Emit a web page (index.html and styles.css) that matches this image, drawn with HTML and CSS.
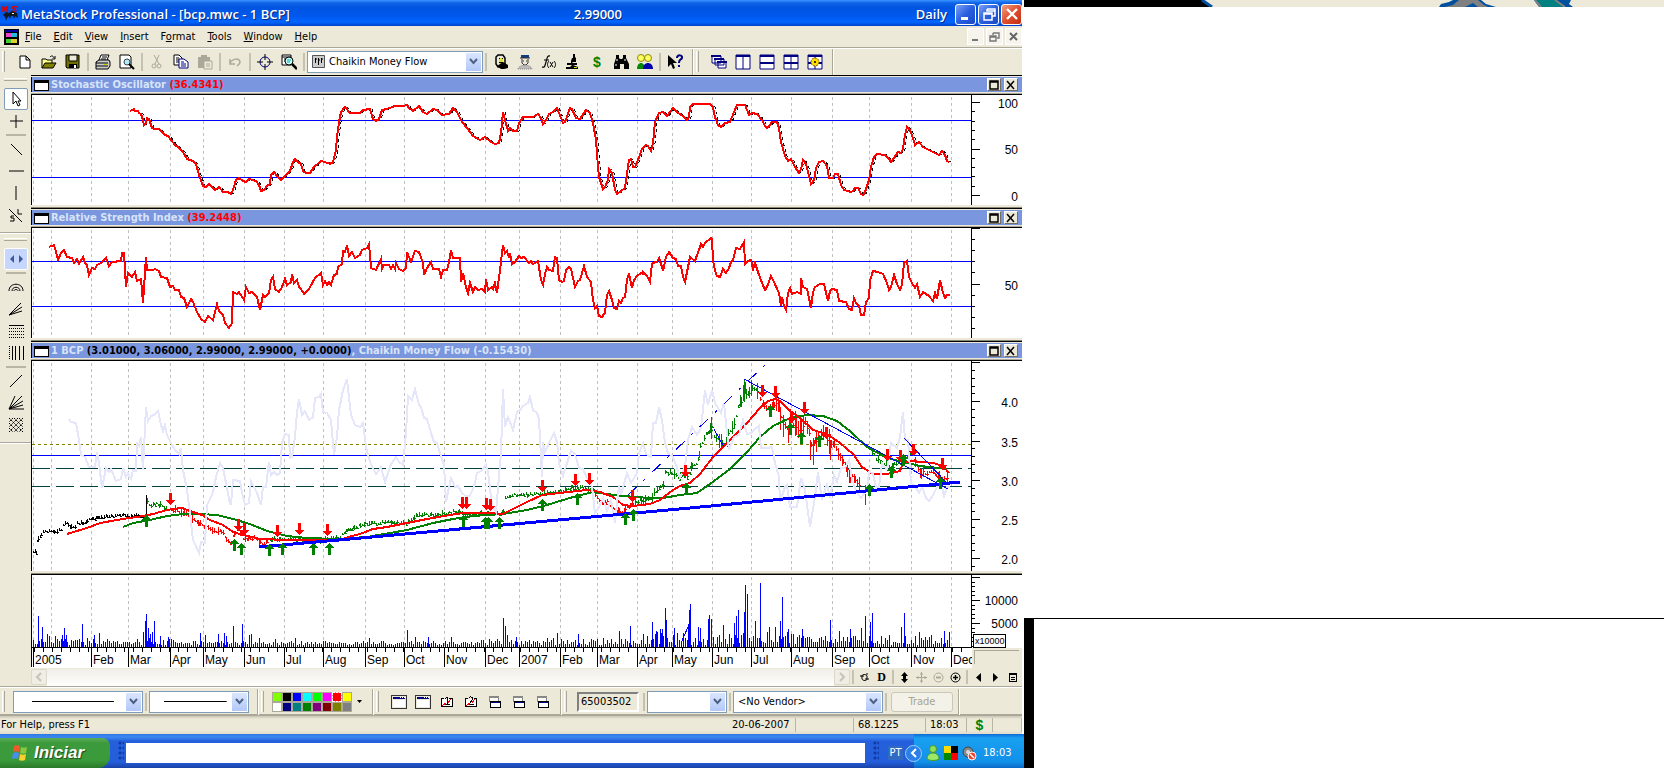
FILE: index.html
```html
<!DOCTYPE html>
<html lang="en">
<head>
<meta charset="UTF-8">
<meta name="viewport" content="width=device-width, initial-scale=1.0">
<title>MetaStock Professional</title>
<link rel="stylesheet" href="styles.css">
</head>
<body>

<div class="screen">
<div class="desktop">

<main class="app">
  <header class="titlebar">
    <svg class="app-icon" width="17" height="16" viewBox="0 0 17 16"><path d="M1 6V0l2 4 2-4v6M15 1c-4-2-6 1-3 2s2 4-3 2" fill="none" stroke="#e00000" stroke-width="1.5"/><path d="M1 9l3-3 3 1 3-2 5 2 1 5-3-2-1 3-1-3-2 0-1 3-1-3-2 2-1 3-1-4z" fill="#101820"/><path d="M10 7h2v1h-2z" fill="#fff"/></svg>
    <h1>MetaStock Professional - [bcp.mwc - 1 BCP]</h1>
    <span class="quote">2.99000</span>
    <span class="period">Daily</span>
    <button class="win" aria-label="Minimize"><svg width="18" height="18"><path d="M4 12h7v3H4z" fill="#fff"/></svg></button>
    <button class="win" aria-label="Restore"><svg width="18" height="18"><path d="M7 4h8v7h-3M7 4v2h8M4 8h8v7H4zM4 9h8" fill="none" stroke="#fff" stroke-width="1.5"/></svg></button>
    <button class="win close" aria-label="Close"><svg width="18" height="18"><path d="M4 4l10 10M14 4L4 14" stroke="#fff" stroke-width="2.4"/></svg></button>
  </header>

  <nav class="menubar">
    <svg width="15" height="16" viewBox="0 0 15 16"><path d="M0 0h15v16H0z"/><path d="M1 1h13v2H1z" fill="#0000a0"/><path d="M2 4h11v4H2z" fill="#e4c"/><path d="M7 4h6v4H7z" fill="#2bd"/><path d="M2 10h11v4H2z" fill="#dc3"/><path d="M2 10h5v4H2z" fill="#4c3"/></svg>
    <button><u>F</u>ile</button>
    <button><u>E</u>dit</button>
    <button><u>V</u>iew</button>
    <button><u>I</u>nsert</button>
    <button>F<u>o</u>rmat</button>
    <button><u>T</u>ools</button>
    <button><u>W</u>indow</button>
    <button><u>H</u>elp</button>
    <div class="mdi">
      <button aria-label="Minimize chart"><svg width="14" height="14"><path d="M4 9h6v2H4z" fill="#777"/></svg></button>
      <button aria-label="Restore chart"><svg width="14" height="14"><path d="M6 3h6v5h-2M6 3v2M3 6h6v5H3zM3 7h6" fill="none" stroke="#777" stroke-width="1.4"/></svg></button>
      <button aria-label="Close chart"><svg width="14" height="14"><path d="M4 3l7 7M11 3l-7 7" stroke="#666" stroke-width="2"/></svg></button>
    </div>
  </nav>

  <div class="toolbar">
    <i class="grip"></i>
    <button class="tool" aria-label="New"><svg width="16" height="16"><path d="M3 2h6l4 4v8H3zM9 2v4h4" fill="#fff" stroke="#000"/></svg></button>
    <button class="tool" aria-label="Open"><svg width="16" height="16"><path d="M1 14V5h4l1 1h5v3" fill="#ffff90" stroke="#000"/><path d="M1 14l3-5h11l-3 5z" fill="#808000" stroke="#000"/><path d="M9 3c2-2 3-1 4 1M14 2v3h-3" fill="none" stroke="#000"/></svg></button>
    <button class="tool" aria-label="Save"><svg width="16" height="16"><path d="M1 1h13v13H2l-1-1z" fill="#707000" stroke="#000"/><path d="M4 1h8v6H4z" fill="#ece9d8" stroke="#000"/><path d="M4 10h8v4H4z"/><path d="M9 11h2v3H9z" fill="#fff"/></svg></button>
    <i class="sep"></i>
    <button class="tool" aria-label="Print"><svg width="16" height="16"><path d="M4 6l2-5h8l-2 5" fill="#fff" stroke="#000"/><path d="M1 8l3-2h10l1 2v4l-2 3H1z" fill="#ccc" stroke="#000"/><path d="M1 9h12M1 12h12M7 3h5M6 5h5" stroke="#000"/><path d="M9 10h3v1H9z" fill="#cc0"/></svg></button>
    <button class="tool" aria-label="Print Preview"><svg width="16" height="16"><path d="M1 1h9l2 2v11H1z" fill="#fff" stroke="#000"/><circle cx="8" cy="8" r="3" fill="#aef" stroke="#444"/><path d="M10 10l5 5" stroke="#000" stroke-width="2"/></svg></button>
    <i class="sep"></i>
    <button class="tool" aria-label="Cut" disabled><svg width="16" height="16"><path d="M5 1l5 9M10 1L6 10" stroke="#aca899" fill="none"/><circle cx="5" cy="12" r="2" fill="none" stroke="#aca899"/><circle cx="10" cy="12" r="2" fill="none" stroke="#aca899"/></svg></button>
    <button class="tool" aria-label="Copy"><svg width="16" height="16"><path d="M1 1h5l3 3v7H1zM3 4h3M3 6h4M3 8h4" fill="#fff" stroke="#000"/><path d="M6 5h5l4 3v6H6zM8 8h3M8 10h5M8 12h5" fill="#fff" stroke="#000080"/></svg></button>
    <button class="tool" aria-label="Paste" disabled><svg width="16" height="16"><path d="M1 3h12v11H1zM4 1h6v3H4z" fill="#aca899"/><path d="M7 7h8v8H7zM9 10h4M9 12h4" fill="#ece9d8" stroke="#aca899"/></svg></button>
    <i class="sep"></i>
    <button class="tool" aria-label="Undo" disabled><svg width="16" height="16"><path d="M3 5v5h5M3 9c3-5 10-5 10-1 0 2-2 3-3 4" fill="none" stroke="#aca899" stroke-width="1.5"/></svg></button>
    <i class="sep"></i>
    <button class="tool" aria-label="Crosshairs"><svg width="16" height="16"><circle cx="8" cy="8" r="5" fill="none" stroke="#000080"/><path d="M8 0v6M8 10v6M0 8h6M10 8h6" stroke="#000"/></svg></button>
    <button class="tool" aria-label="Zoom"><svg width="16" height="16"><path d="M1 1h9v10H1zM1 3h9M3 5h3M3 7h2" fill="#fff" stroke="#000"/><circle cx="8" cy="7" r="4" fill="#c8fff8" stroke="#000"/><path d="M11 10l5 5" stroke="#000" stroke-width="2.5"/><path d="M6 6h4M6 8h3" stroke="#0aa"/></svg></button>
    <i class="sep"></i>
    <div class="combo combo-indicator">
      <svg class="combo-pic" width="13" height="13"><path d="M.5.5h12v12H.5z" fill="#ccc" stroke="#555"/><path d="M3.500 3v5M6.500 3v7M9.500 3v5M3 4h2M6 5h2M9 4h2" stroke="#000"/></svg>
      <select aria-label="Indicator"><option>Chaikin Money Flow</option></select>
      <span class="arrow"><svg width="9" height="7"><path d="M1 1l3.500 4L8 1" fill="none" stroke="#4d6185" stroke-width="2"/></svg></span>
    </div>
    <i class="sep"></i>
    <button class="tool" aria-label="Expert Commentary"><svg width="16" height="16"><path d="M5 1h5l2 3v6l-3 3H5L3 10V3z" fill="#ece9d8" stroke="#000" stroke-width="1.500"/><path d="M6 4h4v6H6z" fill="#dd4"/><path d="M6 4h1v1H6zM9 4h1v1H9zM6 8h4v1H6z"/><path d="M10 8l5 3v3l-4 1H8l-4-3z"/></svg></button>
    <button class="tool" aria-label="Expert Advisor"><svg width="16" height="16"><path d="M4 1h8v3H4z" fill="#113a80"/><path d="M3 4h10M5 5v4l2 2h2l2-2V5M6 7h1M9 7h1" stroke="#333" fill="none"/><path d="M1 15c1-5 13-5 14 0z" fill="#bbb" stroke="#888" stroke-dasharray="1 1"/></svg></button>
    <button class="tool" aria-label="Indicator Builder"><svg width="16" height="16"><path d="M9 2c-3-1-3 3-4 6s-1 6-4 5M3 6h5" fill="none" stroke="#000" stroke-width="1.200"/><path d="M8 7c-2 2-2 5 0 7M13 7c2 2 2 5 0 7M9 8l3 5M12 8l-3 5" fill="none" stroke="#000"/></svg></button>
    <button class="tool" aria-label="Explorer"><svg width="16" height="16"><path d="M8 0h2v3l1 1v4H8l-2 2V7l1-3h1zM2 9h10v2H8l5 2v2H1v-2h4l2-2H2z"/><path d="M9 13h3v1H9z" fill="#dd0"/></svg></button>
    <button class="tool dollar" aria-label="System Tester">$</button>
    <button class="tool" aria-label="Find"><svg width="16" height="16"><path d="M3 1h3v3l1 1h2l1-1V1h3v3l3 6v5h-5v-5H7v5H1v-5l2-6z"/><path d="M4 5v2M12 5v2M3 10v2" stroke="#fff"/></svg></button>
    <button class="tool" aria-label="Users"><svg width="16" height="16"><circle cx="4" cy="4" r="3.500" fill="#ffff60" stroke="#880"/><circle cx="11" cy="4" r="3.500" fill="#ffff60" stroke="#880"/><path d="M0 15c0-8 8-8 8 0z" fill="#080"/><path d="M6 15c0-8 10-8 10 0z" fill="#00a"/></svg></button>
    <i class="sep"></i>
    <button class="tool" aria-label="Context Help"><svg width="17" height="16"><path d="M1 1v12l3-3 2 5 2-1-2-5h4z"/><path d="M10 4c0-4 6-3 5 0-1 2-3 1-3 5M12 11v2" fill="none" stroke="#000080" stroke-width="2"/></svg></button>
    <i class="edge"></i>
    <i class="grip"></i>
    <button class="tool" aria-label="Cascade"><svg width="16" height="16"><path d="M1 2h9v7H1zM4 5h9v6H4zM7 8h8v6H7z" fill="#fff" stroke="#000080"/><path d="M0 1h10v2H0zM3 4h10v2H3zM6 7h10v2H6z" fill="#000080"/></svg></button>
    <button class="tool" aria-label="Columns"><svg width="16" height="16"><path d="M1 1h14v14H1zM8 1v14" fill="#fff" stroke="#000080"/><path d="M1 1h14v2H1z" fill="#000080"/></svg></button>
    <button class="tool" aria-label="Rows"><svg width="16" height="16"><path d="M1 1h14v14H1z" fill="#fff" stroke="#000080"/><path d="M1 1h14v2H1zM1 8h14v2H1z" fill="#000080"/></svg></button>
    <button class="tool" aria-label="Tile"><svg width="16" height="16"><path d="M1 1h14v14H1zM8 1v14" fill="#fff" stroke="#000080"/><path d="M1 1h14v2H1zM1 8h14v2H1z" fill="#000080"/></svg></button>
    <button class="tool" aria-label="Layout Options"><svg width="16" height="16"><path d="M1 1h14v14H1zM8 1v14" fill="#fff" stroke="#000080"/><path d="M1 1h14v2H1zM1 8h14v2H1z" fill="#000080"/><circle cx="8" cy="8" r="4" fill="#fd0" stroke="#750" stroke-dasharray="2 1"/><circle cx="8" cy="8" r="1"/></svg></button>
    <i class="edge"></i>
  </div>

  <div class="workspace">
    <div class="palette">
      <i class="hgrip"></i>
      <button class="draw selected" aria-label="Pointer"><svg width="16" height="16"><path d="M5 1v12l3-3 2 5 2-1-2-4h3z" fill="#fff" stroke="#000"/></svg></button>
      <button class="draw" aria-label="Crosshair"><svg width="16" height="16"><path d="M8 2v13M2 8h13" stroke="#000"/></svg></button>
      <i class="hsep"></i>
      <button class="draw" aria-label="Trendline"><svg width="16" height="16"><path d="M3 3l11 11" stroke="#000"/></svg></button>
      <button class="draw" aria-label="Horizontal Line"><svg width="16" height="16"><path d="M1 8h15" stroke="#000"/></svg></button>
      <button class="draw" aria-label="Vertical Line"><svg width="16" height="16"><path d="M8 1v14" stroke="#000"/></svg></button>
      <button class="draw" aria-label="Long Short"><svg width="16" height="16"><path d="M1 2l13 13M10 2v5h4M6 9H3v2h3v3H2" fill="none" stroke="#000"/></svg></button>
      <i class="hedge"></i>
      <i class="hgrip"></i>
      <button class="draw hot" aria-label="Scroll Tools"><svg width="16" height="16"><path d="M6 4v8L2 8zM11 4v8l4-4z" fill="#3a5a9c"/></svg></button>
      <i class="hsep"></i>
      <button class="draw" aria-label="Fibonacci Arcs"><svg width="16" height="16"><path d="M1 12c0-9 14-9 14 0M4 12c0-5 8-5 8 0M6 12c0-2 4-2 4 0" fill="none" stroke="#000"/></svg></button>
      <button class="draw" aria-label="Fibonacci Fan"><svg width="16" height="16"><path d="M1 14L13 2M1 14l13-8M1 14l13-4" stroke="#000"/></svg></button>
      <button class="draw" aria-label="Fibonacci Retracement"><svg class="crisp" width="16" height="16"><path d="M1 2.500h15" stroke="#000"/><path d="M1 5.500h15M1 8.500h15M1 11.500h15M1 14.500h15" stroke="#000" stroke-dasharray="1 1"/></svg></button>
      <button class="draw" aria-label="Time Zones"><svg class="crisp" width="16" height="16"><path d="M4.500 1v14M7.500 1v14M11.500 1v14M15.500 1v14" stroke="#000"/><path d="M1.500 1v14" stroke="#000" stroke-dasharray="1 1"/></svg></button>
      <i class="hsep"></i>
      <button class="draw" aria-label="Gann Line"><svg width="16" height="16"><path d="M2 14L14 2" stroke="#000"/></svg></button>
      <button class="draw" aria-label="Gann Fan"><svg width="16" height="16"><path d="M1 14L7 1M1 14L14 1M1 14L15 6M1 14l14-4M1 14h15" stroke="#000"/></svg></button>
      <button class="draw" aria-label="Gann Grid"><svg width="16" height="16"><path d="M1 1l14 14M6 1l9 9M11 1l4 4M1 6l9 9M1 11l4 4M15 1L1 15M10 1L1 10M5 1L1 5M15 6l-9 9M15 11l-4 4" stroke="#000" stroke-dasharray="2 1"/></svg></button>
      <i class="hedge"></i>
    </div>

    <div class="charts">
      <section class="panel">
        <div class="panel-title"><i class="sysbox"></i><h2>Stochastic Oscillator <b class="red">(36.4341)</b></h2>
          <button class="pbtn" aria-label="Maximize Stochastic Oscillator"><svg width="12" height="10"><path d="M2 1h8v8H2zM2 2h8" fill="none" stroke="#000" stroke-width="1.500"/></svg></button>
          <button class="pbtn" aria-label="Close Stochastic Oscillator"><svg width="12" height="10"><path d="M2 1l7 8M9 1L2 9" stroke="#000" stroke-width="1.500"/></svg></button></div>
        <svg class="chart" id="stoch" viewBox="31 95 991 110"></svg>
      </section>
      <section class="panel">
        <div class="panel-title"><i class="sysbox"></i><h2>Relative Strength Index <b class="red">(39.2448)</b></h2>
          <button class="pbtn" aria-label="Maximize Relative Strength Index"><svg width="12" height="10"><path d="M2 1h8v8H2zM2 2h8" fill="none" stroke="#000" stroke-width="1.500"/></svg></button>
          <button class="pbtn" aria-label="Close Relative Strength Index"><svg width="12" height="10"><path d="M2 1l7 8M9 1L2 9" stroke="#000" stroke-width="1.500"/></svg></button></div>
        <svg class="chart" id="rsi" viewBox="31 228 991 110"></svg>
      </section>
      <section class="panel">
        <div class="panel-title"><i class="sysbox"></i><h2>1 BCP <b class="black">(3.01000, 3.06000, 2.99000, 2.99000, +0.0000)</b>, Chaikin Money Flow (-0.15430)</h2>
          <button class="pbtn" aria-label="Maximize BCP"><svg width="12" height="10"><path d="M2 1h8v8H2zM2 2h8" fill="none" stroke="#000" stroke-width="1.500"/></svg></button>
          <button class="pbtn" aria-label="Close BCP"><svg width="12" height="10"><path d="M2 1l7 8M9 1L2 9" stroke="#000" stroke-width="1.500"/></svg></button></div>
        <svg class="chart" id="price" viewBox="31 361 991 210"></svg>
      </section>
      <section class="panel last">
        <svg class="chart" id="volume" viewBox="31 575 991 93"></svg>
      </section>

      <div class="scrollrow">
        <button class="scrollbtn" aria-label="Scroll left" disabled><svg width="10" height="10"><path d="M7 1L3 5l4 4" fill="none" stroke="#c5c2b8" stroke-width="2"/></svg></button>
        <div class="track"></div>
        <button class="scrollbtn" aria-label="Scroll right" disabled><svg width="10" height="10"><path d="M3 1l4 4-4 4" fill="none" stroke="#c5c2b8" stroke-width="2"/></svg></button>
        <i class="sep"></i>
        <button class="mini" aria-label="Refresh"><svg width="11" height="11"><path d="M3 7V4c0-2 4-2 5 0M8 4v3c0 2-4 2-5 0M1 4h4M6 7h4M8 1v2" fill="none" stroke="#000"/></svg></button>
        <button class="mini serif" aria-label="Daily periodicity">D</button>
        <i class="sep"></i>
        <button class="mini" aria-label="Rescale"><svg width="11" height="11"><path d="M5.500 0L9 4H7v3h2l-3.500 4L2 7h2V4H2z"/></svg></button>
        <button class="mini" aria-label="Move" disabled><svg width="11" height="11"><path d="M5.500 0v11M0 5.500h11M4 2h3M4 9h3M2 4v3M9 4v3" stroke="#aca899"/></svg></button>
        <button class="mini" aria-label="Zoom out" disabled><svg width="11" height="11"><circle cx="5.500" cy="5.500" r="4.500" fill="none" stroke="#aca899"/><path d="M3 5.500h5" stroke="#aca899" stroke-width="2"/></svg></button>
        <button class="mini" aria-label="Zoom in"><svg width="11" height="11"><circle cx="5.500" cy="5.500" r="4.500" fill="none" stroke="#000"/><path d="M3 5.500h5M5.500 3v5" stroke="#000" stroke-width="1.400"/></svg></button>
        <i class="sep"></i>
        <button class="mini" aria-label="Previous security"><svg width="11" height="11"><path d="M8 1v9L3 5.500z"/></svg></button>
        <button class="mini" aria-label="Next security"><svg width="11" height="11"><path d="M3 1v9l5-4.500z"/></svg></button>
        <button class="mini" aria-label="Choose security"><svg class="crisp" width="11" height="11"><path d="M2.500 1.500h7v8h-7zM2 2.500h8M4 5.500h4M4 7.500h4" fill="none" stroke="#000"/></svg></button>
      </div>
    </div>
  </div>

  <div class="toolbar bottom">
    <i class="grip"></i>
    <div class="combo combo-line"><select aria-label="Line style"><option></option></select><span class="arrow"><svg width="9" height="7"><path d="M1 1l3.500 4L8 1" fill="none" stroke="#4d6185" stroke-width="2"/></svg></span></div>
    <i class="sep"></i>
    <div class="combo combo-weight"><select aria-label="Line weight"><option></option></select><span class="arrow"><svg width="9" height="7"><path d="M1 1l3.500 4L8 1" fill="none" stroke="#4d6185" stroke-width="2"/></svg></span></div>
    <i class="edge"></i>
    <i class="grip"></i>
    <div class="swatches">
      <button class="lime" aria-label="Lime"></button><button class="ink" aria-label="Black"></button><button class="blue" aria-label="Blue"></button><button class="cyan" aria-label="Cyan"></button><button class="green" aria-label="Green"></button><button class="pink" aria-label="Magenta"></button><button class="redc on" aria-label="Red"></button><button class="yellow" aria-label="Yellow"></button>
      <button class="white" aria-label="White"></button><button class="navy" aria-label="Navy"></button><button class="teal" aria-label="Teal"></button><button class="dgreen" aria-label="Dark green"></button><button class="purple" aria-label="Purple"></button><button class="maroon" aria-label="Maroon"></button><button class="olive" aria-label="Olive"></button><button class="gray" aria-label="Gray"></button>
    </div>
    <button class="more" aria-label="More colors"><svg width="7" height="4"><path d="M1 0h5L3.500 3z"/></svg></button>
    <i class="edge"></i>
    <i class="grip"></i>
    <button class="tool" aria-label="New chart"><svg class="crisp" width="16" height="14"><path d="M.5.500h15v13H.5z" fill="#ece9d8" stroke="#333"/><path d="M2 2h12v2H2z" fill="#000080"/><path d="M2 5h12v7H2z" fill="#fff"/><path d="M9 2.500h1M11 2.500h1M13 2.500h1" stroke="#fff"/></svg></button>
    <button class="tool" aria-label="New inner window"><svg class="crisp" width="16" height="14"><path d="M.5.500h15v13H.5z" fill="#ece9d8" stroke="#333"/><path d="M2 2h12v2H2z" fill="#000080"/><path d="M2 5h12v7H2z" fill="#fff"/><path d="M9 2.500h1M11 2.500h1M13 2.500h1" stroke="#fff"/></svg></button>
    <button class="tool" aria-label="Template 1"><svg class="crisp" width="14" height="14"><path d="M4 3.500H1.500v8h11v-8H9" fill="#fff" stroke="#000"/><path d="M5 3.500l2.500-1V9M5 9.500h5" fill="none" stroke="#000"/><path d="M2 11l4-3M8 8l3-4" stroke="red"/></svg></button>
    <button class="tool" aria-label="Template 2"><svg class="crisp" width="14" height="14"><path d="M4 3.500H1.500v8h11v-8H10" fill="#fff" stroke="#000"/><path d="M5 3c1-2 4-1 4 1l-4 5h5" fill="none" stroke="#000"/><path d="M2 11l4-3M8 8l3-4" stroke="red"/></svg></button>
    <button class="tool" aria-label="Stack windows"><svg class="crisp" width="14" height="14"><path d="M1.500 1.500h9v5h-9z" fill="#fff" stroke="#888"/><path d="M1 1h10v2H1z" fill="#888"/><path d="M2.500 6.500h10v6h-10z" fill="#fff" stroke="#000"/><path d="M3 7h9v1H3z" fill="#000080"/></svg></button>
    <button class="tool" aria-label="Bring to front"><svg class="crisp" width="14" height="14"><path d="M1.500 1.500h9v5h-9z" fill="#fff" stroke="#888"/><path d="M1 1h10v2H1z" fill="#888"/><path d="M2.500 6.500h10v6h-10z" fill="#fff" stroke="#000"/><path d="M3 7h9v1H3z" fill="#000080"/></svg></button>
    <button class="tool" aria-label="Send to back"><svg class="crisp" width="14" height="14"><path d="M1.500 1.500h9v5h-9z" fill="#fff" stroke="#888"/><path d="M1 1h10v2H1z" fill="#888"/><path d="M2.500 6.500h10v6h-10z" fill="#fff" stroke="#000"/><path d="M3 7h9v1H3z" fill="#000080"/></svg></button>
    <i class="edge"></i>
    <i class="grip"></i>
    <input class="account" aria-label="Account" value="65003502">
    <i class="sep"></i>
    <div class="combo combo-order"><select aria-label="Order"><option></option></select><span class="arrow"><svg width="9" height="7"><path d="M1 1l3.500 4L8 1" fill="none" stroke="#4d6185" stroke-width="2"/></svg></span></div>
    <i class="sep"></i>
    <div class="combo combo-vendor"><select aria-label="Vendor"><option>&lt;No Vendor&gt;</option></select><span class="arrow"><svg width="9" height="7"><path d="M1 1l3.500 4L8 1" fill="none" stroke="#4d6185" stroke-width="2"/></svg></span></div>
    <i class="sep"></i>
    <button class="trade" disabled>Trade</button>
    <i class="edge"></i>
  </div>

  <footer class="status">
    <span class="hint">For Help, press F1</span>
    <span class="cell date">20-06-2007</span>
    <span class="cell gap"></span>
    <span class="cell value">68.1225</span>
    <span class="cell time">18:03</span>
    <span class="cell money">$</span>
    <span class="cell tail"></span>
  </footer>
</main>

<div class="taskbar">
  <button class="start"><svg width="18" height="18" viewBox="0 0 18 18"><path d="M3 2c2-1 4-1 6 0L8 8c-2-1-4-1-6 0z" fill="#f0592a"/><path d="M10 3c2 1 4 1 6 0l-1 6c-2 1-4 1-6 0z" fill="#8bc83f"/><path d="M2 9c2-1 4-1 6 0l-1 6c-2-1-4-1-6 0z" fill="#4a8df0"/><path d="M9 10c2 1 4 1 6 0l-1 6c-2 1-4 1-6 0z" fill="#fbd12d"/></svg>Iniciar</button>
  <i class="dots"></i>
  <div class="tasks"></div>
  <i class="dots"></i>
  <span class="lang">PT</span>
  <div class="tray">
    <button class="expand" aria-label="Show hidden icons"><svg width="8" height="10"><path d="M6 1L2 5l4 4" fill="none" stroke="#fff" stroke-width="2"/></svg></button>
    <svg width="14" height="16"><circle cx="7" cy="4" r="3.500" fill="#8fe05a" stroke="#4a9a20"/><path d="M1 14c0-8 12-8 12 0-3 2-9 2-12 0z" fill="#9be86a" stroke="#4a9a20"/></svg>
    <svg width="14" height="14"><path d="M0 0h7v7H0z" fill="#fd0"/><path d="M7 0h7v7H7z"/><path d="M0 7h7v7H0z" fill="#080"/><path d="M7 7h7v7H7z" fill="red"/></svg>
    <svg width="15" height="15"><circle cx="6" cy="6" r="5" fill="#888" stroke="#444"/><circle cx="6" cy="6" r="2" fill="#ddd"/><circle cx="10" cy="10" r="4" fill="#e43" stroke="#fff"/><path d="M8 8l4 4" stroke="#fff" stroke-width="1.500"/></svg>
    <span>18:03</span>
  </div>
</div>

</div>

<div class="side">
  <svg class="wallpaper" viewBox="0 0 640 7" preserveAspectRatio="none">
    <path d="M0 0h640v7H0z" fill="#ece9d8"/>
    <path d="M0 0h178l9 7H0z"/>
    <path d="M178 0l10 7" stroke="#0050a0" stroke-width="3"/>
    <path d="M415 7l2-3 8-2 4-2h28l5 4 10 3z" fill="#0050a0"/>
    <path d="M421 7l8-2 6-5h19l6 5 4 2h-10l-5-4-8 4z" fill="#808080"/>
    <path d="M510 0h37l-2 4 4 3h-34z" fill="#0050a0"/>
    <path d="M512 0h20l9 7h-25z" fill="#008080"/>
    <path d="M511 0l6 7M531 0l10 7" stroke="#808080" stroke-width="2"/>
  </svg>
  <div class="blank"></div>
  <div class="lower"></div>
</div>
</div>

<script src="charts.js"></script>
</body>
</html>
```
FILE: styles.css
```css
* {
  box-sizing: border-box;
}
body {
  margin: 0;
  background: #fff;
  color: #000;
  font: 11px/14px "DejaVu Sans Condensed", "DejaVu Sans", sans-serif;
}
button, input, select {
  font: inherit;
  color: inherit;
  margin: 0;
  padding: 0;
  border: 0;
  border-radius: 0;
  background: none;
}
svg {
  display: block;
}
.crisp {
  shape-rendering: crispEdges;
}
.screen {
  display: grid;
  grid-template-columns: minmax(0, 1.6fr) minmax(0, 1fr);
}
.desktop {
  display: flex;
  flex-direction: column;
}
.app {
  margin-right: 2px;
  background: #ece9d8;
}

/* Title bar */
.titlebar {
  display: flex;
  align-items: center;
  gap: 2px;
  height: 26px;
  padding: 2px 0 0 2px;
  color: #fff;
  font: 600 13px/18px "Open Sans", "Noto Sans", sans-serif;
  text-shadow: 1px 1px 0 #0a2a80;
  background: linear-gradient(#3a95ff 0, #0f63e8 3px, #0054e0 8px, #0058ee 16px, #0066ff 22px, #0040c8 26px);
}
.titlebar h1 {
  flex: 0 0 54%;
  margin: 0;
  font: inherit;
}
.titlebar .quote {
  flex: 1;
}
.titlebar .period {
  margin-right: 6px;
}
.win {
  display: grid;
  place-items: center;
  width: 21px;
  height: 21px;
  border: 1px solid #fff;
  border-radius: 3px;
  background: linear-gradient(135deg, #7ba2f5, #2a5fe0 50%, #1a48c8);
}
.win.close {
  background: linear-gradient(135deg, #f0a080, #e05030 50%, #c03010);
}

/* Menu */
.menubar {
  display: flex;
  align-items: center;
  height: 21px;
  padding-left: 4px;
}
.menubar > button {
  padding: 0 6px;
}
.mdi {
  display: flex;
  gap: 2px;
  margin-left: auto;
}
.mdi button {
  width: 17px;
  height: 17px;
  background: #f6f4ec;
  border: 1px solid #fff;
}

/* Toolbars */
.toolbar {
  display: flex;
  align-items: center;
  height: 28px;
  border-top: 1px solid #aca899;
  box-shadow: inset 0 1px 0 #fff;
}
.grip {
  flex: none;
  width: 3px;
  height: 21px;
  margin: 0 8px 0 2px;
  border-right: 1px solid #aca899;
  border-left: 1px solid #fff;
}
.sep {
  flex: none;
  width: 2px;
  height: 18px;
  margin: 0 2px;
  background: #c5c2b2;
}
.edge {
  flex: none;
  width: 2px;
  height: 26px;
  margin-left: 5px;
  background: #aca899;
  border-right: 1px solid #fff;
}
.tool {
  flex: none;
  display: grid;
  place-items: center;
  width: 24px;
  height: 22px;
}
.dollar, .money {
  color: #008000;
  font: bold 14px/18px "Liberation Sans", sans-serif;
}
.combo {
  position: relative;
  flex: none;
  display: flex;
  align-items: center;
  height: 22px;
  background: #fff;
  border: 1px solid #7f9db9;
}
.combo select {
  appearance: none;
  width: 100%;
  height: 100%;
  padding: 0 16px 0 4px;
}
.combo-indicator {
  width: 176px;
  padding-left: 4px;
}
.combo-pic {
  flex: none;
}
.combo-line {
  width: 130px;
}
.combo-weight {
  width: 100px;
  margin-right: 3px;
}
.combo-line select, .combo-weight select {
  background: linear-gradient(#000, #000) 40% 50% / 64% 1px no-repeat;
}
.combo-order {
  width: 80px;
}
.combo-vendor {
  width: 150px;
}
.arrow {
  position: absolute;
  top: 1px;
  right: 1px;
  bottom: 1px;
  width: 15px;
  display: grid;
  place-items: center;
  background: linear-gradient(#dbe6ff, #b2c8f8);
  pointer-events: none;
}

/* Drawing tools on the left */
.workspace {
  display: grid;
  grid-template-columns: 31px minmax(0, 1fr);
}
.palette {
  display: flex;
  flex-direction: column;
  align-items: center;
  padding-top: 3px;
}
.draw {
  flex: none;
  display: grid;
  place-items: center;
  width: 24px;
  height: 22px;
  border-radius: 2px;
}
.draw.selected {
  background: #fff;
  border: 1px solid #7f9db9;
}
.draw.hot {
  background: #c6d6fc;
  border: 1px solid #fff;
}
.hgrip {
  width: 23px;
  height: 3px;
  margin-bottom: 7px;
  border-top: 1px solid #fff;
  border-bottom: 1px solid #aca899;
}
.hsep {
  width: 20px;
  height: 2px;
  margin: 2px 0;
  background: #b8b5a5;
}
.hedge {
  align-self: stretch;
  height: 2px;
  margin: 6px 0 4px;
  background: #aca899;
  border-bottom: 1px solid #fff;
}

/* Chart panels */
.panel {
  border-top: 1px solid #000;
  border-bottom: 1px solid #8a8778;
}
.panel .chart {
  border-bottom: 2px solid #ece9d8;
  box-sizing: content-box;
}
.panel.last, .panel.last .chart {
  border-bottom: 0;
}
.panel-title {
  display: flex;
  align-items: center;
  gap: 3px;
  height: 19px;
  padding: 0 4px 0 3px;
  background: #7a96df;
  border-top: 1px solid #ece9d8;
  border-bottom: 1px solid #000;
  box-shadow: inset 0 -1px 0 #aca899, inset 0 -2px 0 #ece9d8, inset 1px 0 0 #000;
}
.panel-title h2 {
  flex: 1;
  margin: 0 0 2px -1px;
  color: #d8e4f8;
  font: bold 11px/14px "DejaVu Sans Condensed", "DejaVu Sans", sans-serif;
}
.red {
  color: #f00;
}
.black {
  color: #000;
}
.sysbox {
  width: 15px;
  height: 11px;
  background: #fff;
  border: 1px solid #000;
  border-top-width: 3px;
}
.pbtn {
  width: 14px;
  height: 13px;
  margin-bottom: 2px;
  background: #ece9d8;
  border: 1px solid #fff;
  border-right-color: #716f64;
  border-bottom-color: #716f64;
}
.chart {
  width: 100%;
  height: auto;
  background: #fff;
  font: 12px "Liberation Sans", Arial, sans-serif;
  shape-rendering: crispEdges;
}
.chart path, .chart polyline {
  fill: none;
}
.chart .grid {
  stroke: #c0c0c0;
  stroke-dasharray: 3 3;
}
.chart .axis {
  stroke: #000;
}
.chart .level, .chart .trend {
  stroke: #00f;
}
.chart .support {
  stroke: #00f;
  stroke-width: 3;
}
.chart .channel {
  stroke: #00f;
  stroke-dasharray: 12 9 3 9;
}
.chart .olive {
  stroke: #808000;
  stroke-dasharray: 3 3;
}
.chart .dash {
  stroke: #004040;
  stroke-dasharray: 18 6;
}
.chart .r2 {
  stroke: #f00;
  stroke-width: 2;
}
.chart .g2 {
  stroke: #008000;
  stroke-width: 2;
}
.chart .cmf {
  stroke: #e6e6fa;
  stroke-width: 2;
}
.chart .signal {
  stroke: #000;
  stroke-dasharray: 3 3;
}
.chart .up {
  fill: #008000;
  stroke: none;
}
.chart .down {
  fill: #f00;
  stroke: none;
}
.chart .bars {
  stroke: #00f;
}

/* Scroll row */
.scrollrow {
  display: flex;
  align-items: center;
  height: 18px;
  padding-right: 1px;
}
.scrollbtn {
  display: grid;
  place-items: center;
  width: 16px;
  height: 16px;
  background: #f0eee4;
  border: 1px solid #dcd9cc;
  border-radius: 2px;
}
.track {
  flex: 1;
  height: 17px;
  background: linear-gradient(#f0efe8, #fefefc);
}
.scrollrow .sep {
  height: 14px;
}
.mini {
  display: grid;
  place-items: center;
  width: 17px;
  height: 17px;
}
.serif {
  font: bold 12px/14px "Liberation Serif", serif;
}

/* Bottom toolbar */
.bottom {
  height: 30px;
  padding-top: 2px;
  border-bottom: 2px solid #aca899;
}
.swatches {
  display: grid;
  grid-template-columns: repeat(8, 10px);
  grid-auto-rows: 10px;
}
.swatches button {
  border: 1px solid #aca899;
}
.swatches .on {
  border: 1px dashed #fff;
}
.lime { background: #80ff00; }
.ink { background: #000; }
.blue { background: #00f; }
.cyan { background: #0ff; }
.green { background: #0f0; }
.pink { background: #f0f; }
.redc { background: #f00; }
.yellow { background: #ff0; }
.white { background: #fff; }
.navy { background: #000080; }
.teal { background: #008080; }
.dgreen { background: #008000; }
.purple { background: #800080; }
.maroon { background: #800000; }
.swatches .olive { background: #808000; }
.gray { background: #808080; }
.more {
  display: grid;
  place-items: center;
  width: 15px;
  height: 20px;
}
.account {
  width: 62px;
  height: 20px;
  margin: 0 2px;
  padding-left: 2px;
  border: 2px solid;
  border-color: #808080 #fff #fff #808080;
}
.trade {
  width: 62px;
  height: 20px;
  margin-left: 2px;
  color: #a7a593;
  background: #f3f1e8;
  border: 1px solid #c9c7ba;
  border-radius: 3px;
}

/* Status bar */
.status {
  display: flex;
  align-items: center;
  height: 18px;
  padding-left: 1px;
  background: linear-gradient(#c8c5b5, #ece9d8 3px, #ece9d8 14px, #dedbc8);
}
.hint {
  flex: 1;
}
.cell {
  flex: none;
  height: 14px;
  padding: 0 4px;
  white-space: nowrap;
  border-right: 1px solid #b8b5a5;
}
.date {
  width: 68px;
}
.gap {
  width: 58px;
}
.value {
  width: 72px;
}
.time {
  width: 41px;
}
.money {
  width: 26px;
  text-align: center;
  line-height: 14px;
}
.tail {
  width: 29px;
}

/* Taskbar */
.taskbar {
  display: flex;
  align-items: center;
  height: 34px;
  background: linear-gradient(#2f78e4, #3a88f0 3px, #2560dc 7px, #245edb 28px, #1941a5);
}
.start {
  display: flex;
  align-items: center;
  gap: 5px;
  align-self: flex-end;
  width: 110px;
  height: 30px;
  padding-left: 11px;
  color: #fff;
  font: italic bold 17px/20px "Liberation Sans", sans-serif;
  text-shadow: 1px 1px 1px #1c4a1c;
  border-radius: 0 8px 12px 0;
  background: linear-gradient(#5eac56, #3c9a3c 5px, #3b9b3b 22px, #2b7a2b);
}
.dots {
  width: 6px;
  height: 20px;
  margin: 0 2px 0 8px;
  background: radial-gradient(circle at 2px 2px, #0f3aa8 1px, transparent 2px) 0 0 / 4px 5px;
}
.tasks {
  flex: 1;
  height: 20px;
  margin-top: 4px;
  background: #fff;
}
.lang {
  width: 15px;
  margin: 4px 11px 0 7px;
  color: #fff;
  text-align: center;
  background: #316ac5;
}
.tray {
  display: flex;
  align-items: center;
  gap: 4px;
  width: 110px;
  height: 34px;
  padding-top: 4px;
  color: #fff;
  background: linear-gradient(#0c6ad8, #18a0f0 4px, #1290e8 28px, #0c68c8);
}
.expand {
  display: grid;
  place-items: center;
  width: 17px;
  height: 17px;
  margin-left: -9px;
  border: 1px solid #9cd0ff;
  border-radius: 50%;
  background: #2a80e8;
}
.tray span {
  margin-left: 2px;
}

/* Area beside the desktop */
.side {
  display: grid;
  grid-template-rows: 7px minmax(0, 1fr) 150px;
}
.wallpaper {
  width: 100%;
  height: 7px;
}
.lower {
  border-top: 1px solid #000;
  border-left: 10px solid #000;
}
```
FILE: charts.js
```js
var NS = 'http://www.w3.org/2000/svg';
var months = [33, 51, 91, 128, 170, 203, 244, 284, 323, 365, 404, 444, 485, 519, 560, 597, 637, 672, 712, 751, 791, 832, 869, 911, 951];
var AXIS = 971;

function add(id, tag, attrs, text) {
  var el = document.createElementNS(NS, tag);
  for (var k in attrs) el.setAttribute(k, attrs[k]);
  if (text) el.textContent = text;
  document.getElementById(id).appendChild(el);
  return el;
}

// series are stored at three units per pixel, dx/dy is the origin of the block
function points(str, dx, dy) {
  return str.trim().split(/\s+/).map(function (p) {
    var v = p.split(',');
    return [Math.round(v[0] / 3 + dx), Math.round(v[1] / 3 + dy)];
  });
}
function join(pts, ox) {
  return pts.map(function (p) { return (p[0] + (ox || 0)) + ',' + p[1]; }).join(' ');
}
function hline(id, cls, y) {
  add(id, 'path', { 'class': cls, d: 'M32 ' + (y + 0.5) + 'H' + AXIS });
}
function frame(id, top, bottom) {
  months.forEach(function (x) {
    add(id, 'path', { 'class': 'grid', d: 'M' + (x + 0.5) + ' ' + (top + 2) + 'V' + bottom });
  });
}
function axis(id, top, bottom, first, step, count, majors, labels) {
  var d = 'M31.5 ' + top + 'V' + bottom + 'M' + (AXIS + 0.5) + ' ' + top + 'V' + bottom;
  for (var i = 0; i < count; i++) {
    var y = Math.round(first + i * step) + 0.5;
    d += 'M' + AXIS + ' ' + y + 'h' + (majors.indexOf(i) >= 0 ? 9 : 4);
  }
  add(id, 'path', { 'class': 'axis', d: d });
  labels.forEach(function (l) {
    add(id, 'text', { x: 1018, y: l[1], 'text-anchor': 'end' }, l[0]);
  });
}

/* Stochastic */
frame('stoch', 95, 205);
hline('stoch', 'level', 120);
hline('stoch', 'level', 177);
var stoch = points('390,333 402,328 404,333 414,333 418,340 424,343 428,360 432,374 438,370 442,354 448,357 456,383 462,388 478,388 488,400 496,405 504,408 512,420 524,434 534,441 548,455 562,477 580,483 588,492 598,525 610,557 618,560 628,552 644,570 656,561 670,577 684,577 694,582 700,570 708,540 716,535 728,542 738,546 748,537 768,543 778,555 782,573 792,570 800,558 810,552 814,525 822,515 832,527 842,540 852,531 870,513 878,485 886,478 894,487 902,492 910,513 918,520 930,518 942,500 962,482 976,487 990,491 1000,487 1008,450 1012,410 1018,365 1024,335 1036,321 1050,338 1080,339 1088,330 1110,328 1120,358 1128,364 1136,358 1146,331 1160,328 1185,317 1195,319 1210,317 1222,314 1228,324 1240,333 1256,319 1270,336 1280,342 1298,327 1310,330 1326,345 1346,343 1358,323 1370,337 1386,366 1400,385 1420,407 1440,420 1456,412 1474,425 1484,431 1496,429 1502,400 1508,335 1516,360 1524,393', 0, 0)
  .concat(points('0,383 8,393 20,393 28,370 40,352 68,352 84,343 92,355 100,373 108,360 118,343 130,335 140,324 148,340 158,369 166,365 180,325 186,326 198,355 210,357 228,330 240,340 250,370 258,420 264,500 266,530 278,568 284,562 294,540 298,507 306,520 316,570 322,582 332,573 346,565 352,520 358,480 362,477 370,500 376,500 384,480 396,448 408,435 414,438 422,453 430,430 436,365 448,338 460,336 470,348 488,324 504,340 518,348 530,360 536,350 540,320 548,313 600,313 608,320 616,350 624,375 634,381 646,368 660,365 672,335 682,315 704,314 710,330 718,345 726,338 742,343 756,360 764,378 772,385 780,376 786,365 800,367 808,385 814,425 826,468 834,482 844,477 856,502 868,519 874,508 880,481 888,492 894,515 904,552 912,540 918,505 928,487 940,484 950,497 958,533 968,533 976,521 984,523 994,555 1002,570 1022,576 1030,572 1036,563 1044,564 1052,581 1058,585 1066,575 1076,540 1084,500 1092,470 1100,461 1124,466 1136,478 1144,486 1152,475 1164,455 1172,459 1180,448 1186,405 1192,380 1200,390 1208,415 1216,434 1228,427 1240,442 1252,446 1262,453 1286,466 1296,452 1304,465 1312,483 1318,487', 510, 0));
add('stoch', 'polyline', { 'class': 'signal', points: join(stoch, 2) });
add('stoch', 'polyline', { 'class': 'r2', points: join(stoch) });
axis('stoch', 95, 205, 102, 9.3, 11, [0, 5, 10], [['100', 108], ['50', 154], ['0', 201]]);

/* RSI */
frame('rsi', 228, 338);
hline('rsi', 'level', 261);
hline('rsi', 'level', 306);
var rsi = points('148,141 162,136 168,155 174,181 182,160 192,150 202,172 216,174 222,190 232,176 238,192 250,170 256,188 262,195 268,226 276,203 286,208 292,196 302,190 318,175 326,199 336,186 362,184 366,158 372,160 378,262 384,220 396,232 404,216 410,244 424,238 430,310 438,172 442,210 458,211 464,207 476,212 482,232 502,234 510,262 518,257 526,269 536,270 544,292 552,294 562,320 574,297 580,305 590,335 602,357 614,367 624,348 640,361 650,313 656,332 668,345 676,370 688,384 696,370 700,276 712,283 718,276 732,300 738,262 746,278 756,275 772,290 780,330 788,286 794,291 806,280 812,240 820,231 826,268 838,275 846,262 854,238 862,255 872,246 876,222 882,248 890,241 898,262 904,267 912,281 928,267 944,235 962,218 968,255 974,243 982,256 988,246 994,254 1002,226 1010,222 1014,200 1026,192 1030,153 1036,155 1042,135 1048,168 1056,155 1066,175 1080,164 1086,149 1100,145 1108,131 1114,205 1128,211 1142,178 1146,208 1152,195 1168,194 1174,208 1178,194 1184,206 1188,190 1196,207 1208,214 1218,203 1222,155 1234,187 1246,153 1256,155 1268,190 1272,225 1280,205 1294,186 1298,207 1316,206 1322,230 1328,209 1340,211 1346,186 1354,150 1360,173 1380,175 1384,245 1390,220 1398,262 1404,279 1410,250 1418,275 1424,261 1434,270 1446,267 1454,275 1458,238 1464,270 1476,262 1480,268 1486,250 1490,278 1500,210 1510,135 1516,160 1522,153 1528,175', 0, 200)
  .concat(points('0,160 6,192 16,187 28,168 34,175 42,172 56,190 64,182 70,191 84,184 92,240 98,255 104,222 112,200 118,211 130,212 134,172 142,175 146,240 156,247 162,242 168,210 176,202 182,206 196,260 204,243 210,240 222,198 230,232 242,246 250,300 256,324 262,318 268,348 276,351 282,343 286,340 290,285 298,273 306,300 312,325 322,328 328,302 334,310 340,295 346,290 350,240 356,220 366,263 372,240 382,228 392,218 398,222 400,216 410,229 420,245 426,192 436,185 442,187 448,174 456,200 460,214 468,172 478,156 488,174 498,178 504,197 514,198 520,230 526,245 534,200 540,170 554,183 558,175 566,150 572,133 578,140 586,130 602,115 606,117 608,180 614,212 622,228 630,230 640,208 648,218 656,205 664,185 670,180 678,145 690,147 702,127 706,193 714,183 724,180 730,207 736,190 744,217 756,250 764,271 772,262 782,229 792,245 804,273 808,280 812,317 816,292 822,318 828,330 834,280 840,263 846,283 860,276 872,282 874,235 880,262 890,267 896,295 902,324 908,275 916,262 930,253 942,252 954,303 960,273 966,268 982,271 988,303 1008,306 1018,328 1026,331 1032,295 1038,308 1046,318 1054,345 1062,345 1068,305 1078,295 1080,243 1088,213 1104,216 1120,222 1130,250 1138,270 1144,260 1152,224 1160,253 1170,270 1176,255 1182,190 1192,183 1198,230 1206,250 1216,265 1220,252 1230,290 1240,276 1256,287 1270,302 1276,278 1282,297 1290,240 1298,280 1304,294 1310,285 1320,285', 510, 200));
add('rsi', 'polyline', { 'class': 'r2', points: join(rsi) });
axis('rsi', 228, 338, 228, 11.1, 10, [0, 5], [['50', 290]]);

/* Price */
frame('price', 361, 571);
hline('price', 'olive', 444);
hline('price', 'level', 455);
hline('price', 'dash', 468);
hline('price', 'dash', 486);

// fixed noise so the bars look the same on every load
function noise(n) {
  var s = Math.sin(n * 127.1) * 43758.5453;
  return s - Math.floor(s);
}
// OHLC bars around the interpolated close
function ohlc(str, dx, colour, spread) {
  var pts = points(str, dx, 340), d = '', i = 0;
  for (var x = pts[0][0]; x <= pts[pts.length - 1][0]; x += noise(x) > 0.4 ? 2 : 1) {
    while (i < pts.length - 2 && x > pts[i + 1][0]) i++;
    var a = pts[i], b = pts[i + 1];
    var y = a[1] + (b[1] - a[1]) * (x - a[0]) / Math.max(1, b[0] - a[0]);
    var h = 2 + Math.round(noise(x + 3) * noise(x + 9) * spread * 2);
    y = Math.round(y + (noise(x + 5) - 0.5) * 3 - h / 2);
    d += 'M' + (x + 0.5) + ' ' + y + 'v' + h + 'M' + x + ' ' + (y + Math.round(h / 2) + 0.5) + 'h2';
  }
  add('price', 'path', { stroke: colour, d: d });
}
ohlc('100,632 108,640', 0, '#000', 2);
ohlc('112,600 120,592 126,577 160,576 180,570 192,550 215,560 240,545 252,553 268,540 300,530 370,525 436,528', 0, '#000', 2);
add('price', 'path', { stroke: '#000', d: 'M146.5 495v20' });
ohlc('440,485 444,498 470,493 500,503', 0, '#008000', 3);
ohlc('512,507 560,523 580,540 600,552 640,570 665,575 678,600 690,610 705,580 716,570 730,595 770,597 785,615 800,605', 0, '#f00', 4);
ohlc('810,597 870,596 960,600 1020,590 1050,565', 0, '#008000', 2);
ohlc('15,575 50,560 75,550 200,550 230,525 300,522 350,512 370,519 480,523 490,510 495,470 540,465 640,458 700,445 760,448', 340, '#008000', 2);
ohlc('760,455 780,490 800,485 820,510 850,515 875,490', 340, '#f00', 4);
ohlc('880,490 930,475 960,440 970,435 975,400 1000,400 1010,412 1035,405 1050,400', 340, '#008000', 5);
ohlc('20,410 30,380 50,375 60,320 80,280 95,260 100,285 130,315 150,270 165,250 170,200 185,180 193,145 198,165 215,145 235,155', 680, '#008000', 11);
ohlc('240,180 260,210 290,185 300,210 305,250 320,270 330,240 360,270 375,240 390,290 395,340 400,310 430,280 450,310 460,310 480,350 510,400 540,440', 680, '#f00', 15);
add('price', 'path', { stroke: '#008000', d: 'M711.5 417v16M744.5 380v22M745.5 382v12' });
add('price', 'path', { stroke: '#f00', d: 'M865.5 485v20M780.5 408v22M783.5 415v22M788.5 425v18M810.5 440v20M813.5 445v20M830.5 440v20' });
ohlc('575,340 590,360 630,380 650,370 665,370 690,340', 680, '#008000', 6);
ohlc('700,360 720,395 760,400 790,420 805,415', 680, '#f00', 8);

function both(cls, a, b, c) {
  add('price', 'polyline', { 'class': cls, points: join(points(a, 0, 340).concat(points(b, 340, 340), points(c, 680, 340))) });
}
both('g2', '370,562 400,550 450,540 500,528 550,521 600,522 650,525 700,537 750,553 800,572 860,588 920,594 1010,596',
  '80,590 150,578 200,571 280,549 340,537 400,529 490,523 560,510 620,495 700,472 760,457 800,461 850,468 930,473 970,474',
  '0,466 50,460 90,433 150,388 200,335 240,290 280,257 330,235 380,226 430,228 470,243 510,273 560,322 620,355 670,366 720,378 800,388');
both('r2', '202,582 230,572 260,563 300,550 370,537 430,529 460,523 500,511 520,508 545,505 570,513 605,525 630,540 670,555 700,577 730,585 780,596 860,600 960,600 1020,599',
  '15,594 60,582 100,568 140,560 200,550 260,536 330,524 370,518 440,520 490,522 520,508 560,485 606,464 660,458 740,450 780,455 820,472 850,494 880,498 930,491 960,479 1000,450',
  '0,437 30,430 60,403 100,350 150,300 200,248 240,203 265,183 285,176 300,182 330,212 360,235 400,270 440,282 480,308 520,342 545,380 580,402 620,402 660,392 670,370 695,363 760,370 790,378 808,400');
both('cmf', '208,237 214,247 228,250 236,300 242,346 256,350 266,380 286,382 292,335 298,370 306,445 318,385 326,396 334,386 348,424 364,418 370,385 378,412 384,398 392,418 400,390 408,393 412,305 418,318 424,290 430,390 438,200 444,243 452,228 462,226 474,212 482,255 490,274 496,255 502,285 512,310 524,330 536,343 542,325 550,390 560,450 570,520 578,600 586,612 596,640 604,607 614,610 620,495 632,470 640,456 648,410 660,370 668,385 678,430 690,493 694,492 700,420 720,424 726,460 734,495 748,490 752,424 762,440 770,460 782,496 790,440 798,440 808,365 814,405 822,395 832,406 840,400 846,310 854,283 866,285 870,355 876,350 884,290 890,215 898,178 906,225 914,213 926,240 940,230 944,175 956,172 964,163 970,215 982,220 992,240 1002,345 1010,290 1018,210',
  '8,150 22,118 32,225 44,255 60,262 70,248 78,320 90,365 108,402 122,382 134,425 152,373 168,350 176,365 188,374 198,280 204,168 216,180 226,148 236,195 244,200 252,235 260,237 272,280 282,305 290,308 298,330 312,375 318,487 328,440 334,415 344,440 354,437 366,460 380,470 390,465 402,440 410,400 424,392 438,376 444,395 456,495 468,515 474,445 482,340 490,148 496,262 504,230 518,270 530,217 540,210 550,197 564,190 570,170 580,210 592,220 598,237 606,412 608,305 616,335 628,310 642,280 650,305 656,370 668,407 682,370 694,333 706,342 716,383 728,387 740,415 756,440 764,518 776,500 790,475 800,512 812,480 826,550 836,435 842,465 860,400 872,430 890,400 898,340 910,308 918,342 932,352 938,250 948,250 958,202 966,240 974,310 984,340 1000,350 1010,385',
  '0,415 14,380 24,300 36,260 52,285 64,265 74,150 84,195 96,150 106,190 122,220 132,190 142,280 148,330 162,290 178,285 190,240 200,282 214,280 228,265 236,258 244,325 262,325 276,320 286,370 296,410 300,485 314,440 322,435 330,500 350,500 364,415 374,450 390,560 406,470 414,395 426,480 440,430 450,475 462,405 472,425 482,385 494,385 508,360 516,420 530,460 544,475 560,450 568,395 580,400 588,445 596,440 606,370 622,390 632,310 650,325 660,290 668,215 674,300 684,300 694,430 704,437 716,460 726,440 738,475 746,483 756,470 770,440 784,425 792,468 800,440 810,440');

add('price', 'path', { 'class': 'support', d: 'M259 547L350 539L690 508L960 482' });
add('price', 'path', { 'class': 'trend', d: 'M744 379L948 489M904 438L947 483M714 429L724 447' });
add('price', 'path', { 'class': 'channel', d: 'M628 495L766 364' });

var SELL = [[170, 493], [238, 519], [244, 523], [277, 525], [299, 523], [327, 524], [462, 497], [466, 497], [486, 498], [490, 499], [542, 480], [575, 474], [589, 473], [632, 490], [685, 465], [762, 385], [775, 386], [791, 411], [804, 402], [826, 427], [887, 449], [900, 450], [913, 444], [942, 458]];
var BUY = [[146, 515], [234, 539], [241, 543], [269, 544], [282, 543], [313, 543], [329, 543], [463, 515], [485, 517], [488, 517], [499, 517], [542, 499], [577, 493], [625, 513], [633, 509], [686, 483], [770, 405], [790, 423], [801, 432], [819, 435], [869, 484], [891, 466], [903, 454], [940, 477]];
SELL.forEach(function (p) {
  add('price', 'path', { 'class': 'down', d: 'M' + (p[0] - 1) + ' ' + p[1] + 'h3v7h3l-4.500 5-4.500-5h3z' });
});
BUY.forEach(function (p) {
  add('price', 'path', { 'class': 'up', d: 'M' + (p[0] + 0.5) + ' ' + p[1] + 'l4.500 5h-3v7h-3v-7h-3z' });
});
axis('price', 361, 571, 362, 7.85, 27, [0, 5, 10, 15, 20, 25], [['4.0', 407], ['3.5', 447], ['3.0', 486], ['2.5', 525], ['2.0', 564]]);

/* Volume */
frame('volume', 575, 647);
var peaks = { 38: 31, 42: 20, 47: 13, 49: 11, 55: 11, 62: 12, 64: 19, 66: 12, 82: 23, 94: 12, 99: 14, 143: 15, 145: 26, 146: 33, 148: 19, 150: 13, 152: 15, 154: 26, 160: 11, 168: 10, 200: 14, 205: 12, 218: 13, 224: 14, 226: 11, 233: 21, 242: 23, 249: 12, 251: 13, 259: 9, 275: 8, 295: 9, 369: 9, 407: 17, 415: 10, 428: 10, 451: 10, 503: 29, 505: 21, 507: 12, 516: 10, 557: 14, 578: 13, 619: 16, 630: 21, 652: 25, 656: 16, 660: 18, 662: 18, 665: 39, 666: 27, 674: 19, 688: 22, 689: 37, 690: 43, 698: 20, 700: 19, 708: 28, 709: 32, 711: 28, 723: 22, 734: 24, 736: 31, 738: 37, 744: 35, 745: 62, 747: 53, 755: 26, 760: 64, 769: 20, 775: 20, 780: 26, 782: 50, 788: 18, 802: 18, 830: 27, 839: 16, 850: 18, 861: 19, 865: 31, 870: 25, 872: 34, 901: 20, 904: 34, 919: 15, 944: 16, 949: 15 };
var bars = '';
for (var x = 33; x < 950; x++) {
  var h = peaks[x] || 0;
  if (!h && x % 2) {
    var base = x < 175 ? 7 : x < 480 ? 4 : x < 640 ? 7 : x < 800 ? 14 : 10;
    h = 2 + noise(x) * base;
  }
  if (h) bars += 'M' + (x + 0.5) + ' 647v' + -Math.round(h);
}
add('volume', 'path', { 'class': 'bars', d: bars + 'M682 641L690 622' });
axis('volume', 575, 647, 577, 4.6, 16, [0, 5, 10], [['10000', 605], ['5000', 628]]);

var names = ['2005', '', 'Feb', 'Mar', 'Apr', 'May', 'Jun', 'Jul', 'Aug', 'Sep', 'Oct', 'Nov', 'Dec', '2007', 'Feb', 'Mar', 'Apr', 'May', 'Jun', 'Jul', 'Aug', 'Sep', 'Oct', 'Nov', 'Dec'];
var ticks = 'M31.5 647V667M31 647.5H972';
for (var w = 34; w < 968; w += 9) ticks += 'M' + (w + 0.5) + ' 648v4';
names.forEach(function (n, i) {
  if (!n) return;
  ticks += 'M' + (months[i] + 0.5) + ' 648V667';
  add('volume', 'text', { x: months[i] + 2, y: 664 }, n);
});
add('volume', 'path', { 'class': 'axis', d: ticks });
add('volume', 'path', { d: 'M972 648h50v20h-50z', style: 'fill:#ece9d8' });
add('volume', 'path', { d: 'M974.5 664V650.5H1019', stroke: '#aca899' });
add('volume', 'path', { d: 'M973.5 634.5h32v13h-32z', style: 'fill:#fff', stroke: '#000' });
add('volume', 'text', { x: 975, y: 644, 'font-size': 9 }, 'x10000');
```
